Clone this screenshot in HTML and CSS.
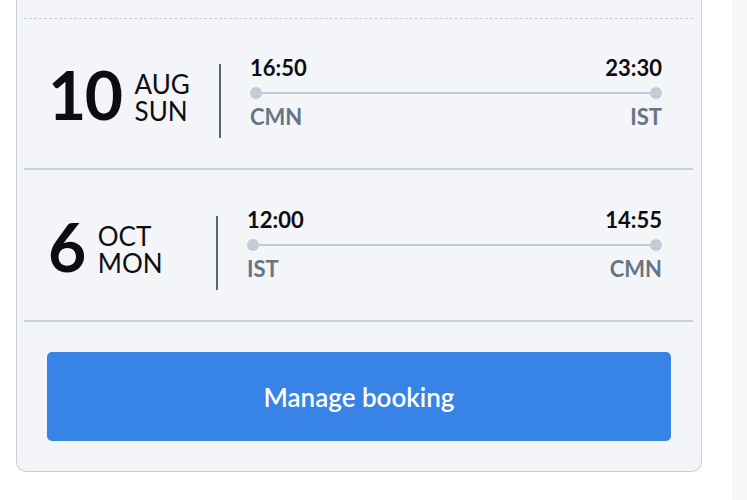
FILE: index.html
```html
<!DOCTYPE html>
<html lang="en">
<head>
<meta charset="utf-8">
<title>Booking</title>
<link rel="stylesheet" href="styles.css">
</head>
<body>
<div class="page">
  <main class="main">
    <section class="card">
      <div class="legs">
        <div class="leg-top"></div>
        <div class="leg">
          <div class="date">
            <span class="day">10</span>
            <span class="mon-wk"><span>AUG</span><span>SUN</span></span>
          </div>
          <div class="divider"></div>
          <div class="info">
            <div class="times"><span>16:50</span><span>23:30</span></div>
            <div class="track"><span class="dot"></span><span class="bar"></span><span class="dot"></span></div>
            <div class="ports"><span>CMN</span><span>IST</span></div>
          </div>
        </div>
        <div class="leg leg--second">
          <div class="date date--narrow">
            <span class="day">6</span>
            <span class="mon-wk"><span>OCT</span><span>MON</span></span>
          </div>
          <div class="divider"></div>
          <div class="info">
            <div class="times"><span>12:00</span><span>14:55</span></div>
            <div class="track"><span class="dot"></span><span class="bar"></span><span class="dot"></span></div>
            <div class="ports"><span>IST</span><span>CMN</span></div>
          </div>
        </div>
      </div>
      <div class="actions">
        <button class="btn" type="button">Manage booking</button>
      </div>
    </section>
  </main>
  <div class="scroll-strip"></div>
</div>
</body>
</html>
```

FILE: styles.css
```css
* { box-sizing: border-box; }

html, body {
  margin: 0;
  padding: 0;
  background: #ffffff;
}

body {
  font-family: Lato, "Open Sans", Arial, sans-serif;
  color: #0d0d10;
  height: 500px;
  overflow: hidden;
}

.page {
  display: flex;
  height: 500px;
}

.main {
  flex: 1;
  padding: 0 30px 0 16px;
}

.scroll-strip {
  width: 15px;
  background: #f6f6f7;
}

.card {
  width: 686px;
  background: #f4f5f8;
  border: 1px solid #c9cdd9;
  border-top: 0;
  border-radius: 0 0 10px 10px;
}

.legs {
  margin: 0 8px 0 7px;
}

.leg-top {
  height: 19px;
  border-bottom: 1px dashed #c8ccd6;
}

.leg {
  display: flex;
  align-items: flex-start;
  padding: 37px 31px 30px 24px;
  border-bottom: 2px solid #c9cfdc;
}

.leg--second {
  padding-top: 38px;
}

.date {
  width: 140px;
  margin-top: 7px;
  display: flex;
  align-items: flex-end;
  gap: 13px;
}

.date--narrow {
  width: 137px;
}

.day {
  font-size: 66px;
  line-height: 64px;
  font-weight: 700;
  letter-spacing: -1.5px;
}

.mon-wk {
  display: flex;
  flex-direction: column;
  font-size: 26px;
  line-height: 27px;
  margin-bottom: 2px;
}

.divider {
  width: 2px;
  height: 74px;
  margin: 8px 29px 0 31px;
  background: #5b6474;
}

.info {
  flex: 1;
  display: flex;
  flex-direction: column;
}

.times,
.ports {
  display: flex;
  justify-content: space-between;
  font-size: 22px;
  line-height: 24px;
  font-weight: 700;
}

.times { color: #0d0d10; }

.ports {
  color: #677484;
  margin-top: 6px;
}

.track {
  display: flex;
  align-items: center;
  margin-top: 7px;
  height: 12px;
}

.dot {
  width: 12px;
  height: 12px;
  border-radius: 50%;
  background: #c5cbd8;
  flex: none;
}

.bar {
  flex: 1;
  height: 2px;
  background: #c3c9d6;
}

.actions {
  padding: 30px;
}

.btn {
  display: flex;
  align-items: center;
  justify-content: center;
  width: 100%;
  height: 89px;
  border: 0;
  border-radius: 5px;
  background: #3784e6;
  color: #ffffff;
  font-family: Lato, "Open Sans", Arial, sans-serif;
  font-size: 26px;
  font-weight: 600;
  padding: 0;
}
```
